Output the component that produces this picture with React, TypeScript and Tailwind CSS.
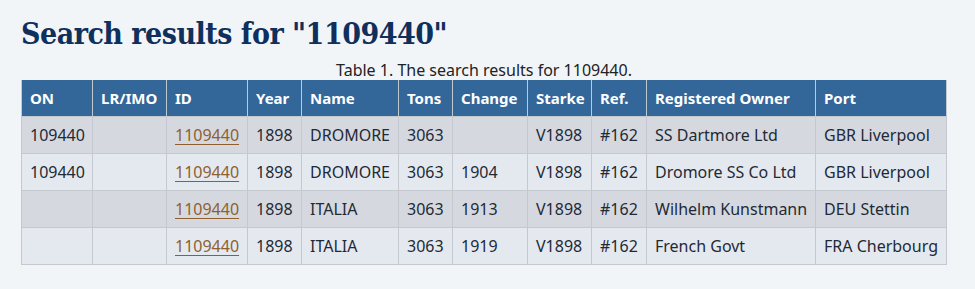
import React from "react";

const headers = ["ON", "LR/IMO", "ID", "Year", "Name", "Tons", "Change", "Starke", "Ref.", "Registered Owner", "Port"];
const widths = [71, 74, 81, 54, 97, 54, 75, 64, 55, 169, 131];

const rows = [
  ["109440", "", "1109440", "1898", "DROMORE", "3063", "", "V1898", "#162", "SS Dartmore Ltd", "GBR Liverpool"],
  ["109440", "", "1109440", "1898", "DROMORE", "3063", "1904", "V1898", "#162", "Dromore SS Co Ltd", "GBR Liverpool"],
  ["", "", "1109440", "1898", "ITALIA", "3063", "1913", "V1898", "#162", "Wilhelm Kunstmann", "DEU Stettin"],
  ["", "", "1109440", "1898", "ITALIA", "3063", "1919", "V1898", "#162", "French Govt", "FRA Cherbourg"],
];

export default function App() {
  return (
    <div className="min-h-[289px] w-[975px] bg-[#f2f5f8] px-[21px] pt-[14px] font-['Noto_Sans',sans-serif] text-[16px] text-[#1f2a36]">
      <h1 className="font-['DejaVu_Serif_Condensed','DejaVu_Serif',serif] text-[30px] font-bold leading-[40px] tracking-[-0.5px] text-[#0f2f5c]">
        Search results for "1109440"
      </h1>
      <table className="mt-[6px] table-fixed border-collapse" style={{ width: 925 }}>
        <caption className="h-[20px] text-center leading-[20px] text-[#222]">Table 1. The search results for 1109440.</caption>
        <colgroup>
          {widths.map((w, i) => (
            <col key={i} style={{ width: w }} />
          ))}
        </colgroup>
        <thead>
          <tr className="bg-[#336699]">
            {headers.map((h) => (
              <th
                key={h}
                className="h-[36px] border-x border-[#c4c9cf] px-[8px] text-left text-[15px] font-bold leading-[20px] text-white"
              >
                {h}
              </th>
            ))}
          </tr>
        </thead>
        <tbody>
          {rows.map((r, i) => (
            <tr key={i} className={i % 2 === 0 ? "bg-[#d5d9df]" : "bg-[#e4e9ef]"}>
              {r.map((c, j) => (
                <td key={j} className="h-[37px] border border-[#c4c9cf] px-[8px] leading-[20px] whitespace-nowrap">
                  {j === 2 ? (
                    <a href="#" className="text-[#8f5f30] underline decoration-1 underline-offset-[3px]">
                      {c}
                    </a>
                  ) : (
                    c
                  )}
                </td>
              ))}
            </tr>
          ))}
        </tbody>
      </table>
    </div>
  );
}
